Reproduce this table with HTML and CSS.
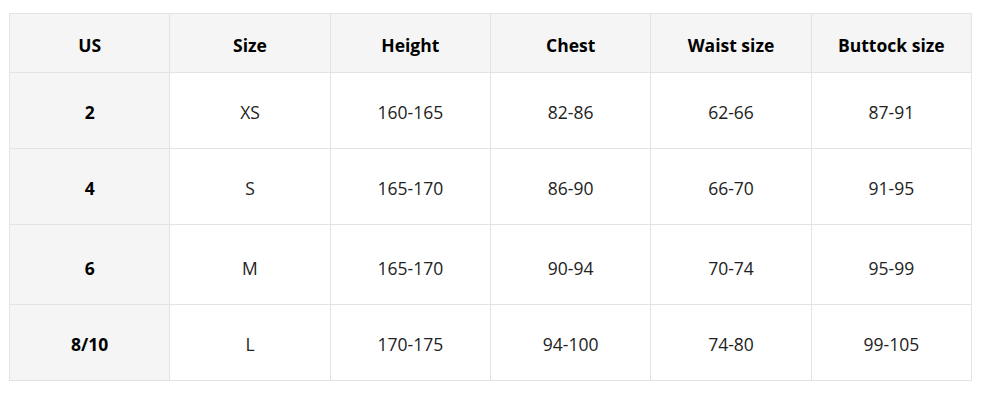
FILE: index.html
```html
<!DOCTYPE html>
<html>
<head>
<meta charset="utf-8">
<link rel="stylesheet" href="styles.css">
</head>
<body>
<table class="size-table">
  <thead>
    <tr class="head-row">
      <th>US</th><th>Size</th><th>Height</th><th>Chest</th><th>Waist size</th><th>Buttock size</th>
    </tr>
  </thead>
  <tbody>
    <tr class="r1"><th>2</th><td>XS</td><td>160-165</td><td>82-86</td><td>62-66</td><td>87-91</td></tr>
    <tr class="r2"><th>4</th><td>S</td><td>165-170</td><td>86-90</td><td>66-70</td><td>91-95</td></tr>
    <tr class="r3"><th>6</th><td>M</td><td>165-170</td><td>90-94</td><td>70-74</td><td>95-99</td></tr>
    <tr class="r4"><th>8/10</th><td>L</td><td>170-175</td><td>94-100</td><td>74-80</td><td>99-105</td></tr>
  </tbody>
</table>
</body>
</html>
```
FILE: styles.css
```css
html, body {
  margin: 0;
  padding: 0;
  background: #ffffff;
}
body {
  padding: 13px 0 0 9px;
  font-family: "Open Sans", "Noto Sans", "Liberation Sans", sans-serif;
  color: #222;
}
.size-table {
  border-collapse: collapse;
  width: 963px;
  table-layout: fixed;
  font-size: 17.5px;
}
.size-table th,
.size-table td {
  border: 1px solid #e3e3e3;
  text-align: center;
  vertical-align: middle;
  padding: 2px 0 0;
}
.size-table th {
  font-weight: 700;
  color: #000;
  background: #f5f5f5;
}
.size-table td {
  font-weight: 400;
  color: #222;
  background: #ffffff;
}
.head-row { height: 59px; }
.head-row th { padding-top: 4px; }
.r1, .r2, .r4 { height: 76px; }
.r3 { height: 80px; }
.r3 th, .r3 td { padding-top: 7px; }
```
